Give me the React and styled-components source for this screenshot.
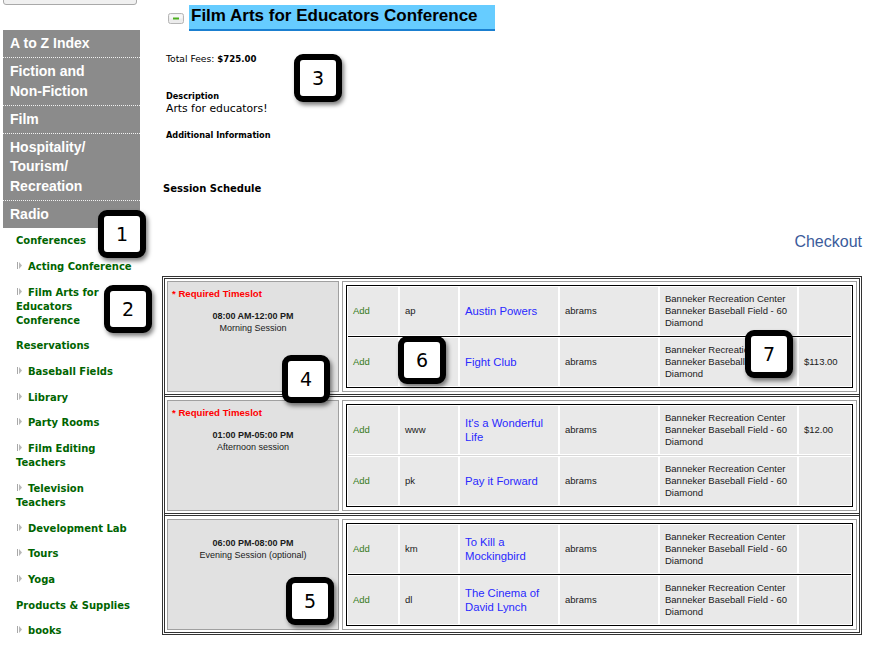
import React from "react";
import styled, { createGlobalStyle } from "styled-components";

const GlobalStyle = createGlobalStyle`
  html, body {
    margin: 0;
    padding: 0;
    background: #ffffff;
  }
  body {
    font-family: "Liberation Sans", Arial, sans-serif;
    color: #000;
  }
`;

const menu = [
  "A to Z Index",
  "Fiction and\nNon-Fiction",
  "Film",
  "Hospitality/\nTourism/\nRecreation",
  "Radio",
];

const subMenu = [
  { label: "Conferences", level: 0 },
  { label: "Acting Conference", level: 1 },
  { label: "Film Arts for\nEducators\nConference", level: 1 },
  { label: "Reservations", level: 0 },
  { label: "Baseball Fields", level: 1 },
  { label: "Library", level: 1 },
  { label: "Party Rooms", level: 1 },
  { label: "Film Editing\nTeachers", level: 1 },
  { label: "Television\nTeachers", level: 1 },
  { label: "Development Lab", level: 1 },
  { label: "Tours", level: 1 },
  { label: "Yoga", level: 1 },
  { label: "Products & Supplies", level: 0 },
  { label: "books", level: 1 },
];

const location = "Banneker Recreation Center\nBanneker Baseball Field - 60\nDiamond";

const sessions = [
  {
    required: true,
    time: "08:00 AM-12:00 PM",
    name: "Morning Session",
    darkLine: true,
    slots: [
      { code: "ap", title: "Austin Powers", price: "" },
      { code: "", title: "Fight Club", price: "$113.00" },
    ],
  },
  {
    required: true,
    time: "01:00 PM-05:00 PM",
    name: "Afternoon session",
    darkLine: false,
    slots: [
      { code: "www", title: "It's a Wonderful\nLife", price: "$12.00" },
      { code: "pk", title: "Pay it Forward", price: "" },
    ],
  },
  {
    required: false,
    time: "06:00 PM-08:00 PM",
    name: "Evening Session (optional)",
    darkLine: true,
    slots: [
      { code: "km", title: "To Kill a\nMockingbird", price: "" },
      { code: "dl", title: "The Cinema of\nDavid Lynch", price: "" },
    ],
  },
];

const callouts = [
  { n: 1, x: 98, y: 210 },
  { n: 2, x: 104, y: 285 },
  { n: 3, x: 294, y: 54 },
  { n: 4, x: 282, y: 355 },
  { n: 5, x: 286, y: 577 },
  { n: 6, x: 398, y: 336 },
  { n: 7, x: 745, y: 330 },
];

const Arrow = () => (
  <ArrowIcon width="5" height="7" viewBox="0 0 5 7">
    <rect x="0" y="0" width="1" height="7" fill="#a8a8a8" />
    <polygon points="2,0 5,3.5 2,7" fill="#b8b8b8" />
  </ArrowIcon>
);

const CollapseIcon = () => (
  <svg width="16" height="11" viewBox="0 0 16 11">
    <rect x="0.5" y="0.5" width="15" height="10" rx="2" fill="#ececec" stroke="#b5b5b5" />
    <rect x="1.5" y="1.5" width="13" height="4" rx="1" fill="#f8f8f8" />
    <rect x="5" y="4.5" width="6" height="2" fill="#4caf1e" />
  </svg>
);

export default function App() {
  return (
    <>
      <GlobalStyle />
      <Page>
        <Sidebar>
          <LocationSelect>All locations</LocationSelect>
          <Menu>
            {menu.map((item) => (
              <MenuItem key={item}>{item}</MenuItem>
            ))}
          </Menu>
          <SubList>
            {subMenu.map((item) => (
              <SubItem key={item.label} $level={item.level}>
                {item.level === 1 && <Arrow />}
                {item.label}
              </SubItem>
            ))}
          </SubList>
        </Sidebar>

        <Main>
          <TitleRow>
            <CollapseIcon />
            <Title>Film Arts for Educators Conference</Title>
          </TitleRow>

          <Fees>
            Total Fees: <b>$725.00</b>
          </Fees>

          <Label>Description</Label>
          <Body>Arts for educators!</Body>
          <Label $gap={13}>Additional Information</Label>

          <ScheduleHeading>Session Schedule</ScheduleHeading>

          <CheckoutRow>
            <Checkout href="#">Checkout</Checkout>
          </CheckoutRow>

          <Schedule>
            {sessions.map((s) => (
              <SessionRow key={s.time}>
                <TimeCell>
                  {s.required && <Required>* Required Timeslot</Required>}
                  <TimeText $spaced={!s.required}>{s.time}</TimeText>
                  <SessionName>{s.name}</SessionName>
                </TimeCell>
                <SlotCell>
                  <SlotTable>
                    {s.slots.map((slot, i) => (
                      <Slot key={slot.title} $first={i === 0} $dark={s.darkLine}>
                        <Cell>
                          <AddLink>Add</AddLink>
                        </Cell>
                        <Cell>{slot.code}</Cell>
                        <Cell>
                          <MovieLink>{slot.title}</MovieLink>
                        </Cell>
                        <Cell>abrams</Cell>
                        <Cell>{location}</Cell>
                        <Cell>{slot.price}</Cell>
                      </Slot>
                    ))}
                  </SlotTable>
                </SlotCell>
              </SessionRow>
            ))}
          </Schedule>
        </Main>

        {callouts.map((c) => (
          <Callout key={c.n} $x={c.x} $y={c.y}>
            {c.n}
          </Callout>
        ))}
      </Page>
    </>
  );
}

const Page = styled.div`
  position: relative;
  display: flex;
  width: 870px;
  height: 645px;
  overflow: hidden;
`;

const Sidebar = styled.div`
  width: 157px;
  padding-left: 3px;
  flex-shrink: 0;
`;

const LocationSelect = styled.div`
  box-sizing: border-box;
  width: 134px;
  height: 20px;
  margin-top: -15px;
  padding: 2px 5px;
  border: 1px solid #a9a9a9;
  border-radius: 3px;
  background: #f0f0f0;
  font-size: 11px;
  line-height: 14px;
  color: #000;
`;

const Menu = styled.div`
  width: 137px;
  margin-top: 25px;
  background: #8b8b8b;
`;

const MenuItem = styled.div`
  padding: 4px 6px 3.5px 7px;
  font-family: "Liberation Sans", Arial, sans-serif;
  font-weight: bold;
  font-size: 14px;
  line-height: 19.5px;
  color: #ffffff;
  white-space: pre-line;
  border-bottom: 1px dotted #f2f2f2;

  &:last-child {
    border-bottom: none;
  }
`;

const SubList = styled.div`
  padding-top: 1px;
`;

const SubItem = styled.div`
  padding: 5.85px 0 5.85px 13px;
  font-family: "DejaVu Sans", Verdana, sans-serif;
  font-weight: bold;
  font-size: 10px;
  line-height: 14px;
  color: #006400;
  white-space: pre-line;
`;

const ArrowIcon = styled.svg`
  display: inline-block;
  margin: 0 6px 0 1px;
  vertical-align: 1px;
`;

const Main = styled.div`
  width: 700px;
  padding-left: 2px;
  display: flex;
  flex-direction: column;
`;

const TitleRow = styled.div`
  display: flex;
  align-items: center;
  gap: 5px;
  margin-top: 5px;
  padding-left: 6px;
`;

const Title = styled.h1`
  width: 304px;
  height: 24px;
  margin: 0;
  padding-left: 2px;
  background: #66ccff;
  border-bottom: 2px solid #1a7fd0;
  font-family: "Liberation Sans", Arial, sans-serif;
  font-weight: bold;
  font-size: 17px;
  line-height: 22px;
  color: #000;
`;

const Fees = styled.div`
  margin-top: 22px;
  padding-left: 4px;
  font-family: "DejaVu Sans", Verdana, sans-serif;
  font-size: 9.2px;
  line-height: 12px;

  b {
    font-size: 8.6px;
  }
`;

const Label = styled.div`
  margin-top: ${(p) => p.$gap || 25}px;
  padding-left: 4px;
  font-family: "DejaVu Sans", Verdana, sans-serif;
  font-weight: bold;
  font-size: 8.2px;
  line-height: 12px;
`;

const Body = styled.div`
  padding-left: 4px;
  font-family: "DejaVu Sans", Verdana, sans-serif;
  font-size: 10.8px;
  line-height: 14px;
`;

const ScheduleHeading = styled.div`
  margin-top: 41px;
  padding-left: 1px;
  font-family: "DejaVu Sans", Verdana, sans-serif;
  font-weight: bold;
  font-size: 10px;
  line-height: 14px;
`;

const CheckoutRow = styled.div`
  display: flex;
  justify-content: flex-end;
  margin-top: 37px;
`;

const Checkout = styled.a`
  font-family: "Liberation Sans", Arial, sans-serif;
  font-size: 16px;
  line-height: 18px;
  color: #3b5b9b;
  text-decoration: none;
`;

const Schedule = styled.div`
  margin-top: 25px;
  width: 700px;
  box-sizing: border-box;
  border: 3px double #333;
`;

const SessionRow = styled.div`
  display: grid;
  grid-template-columns: 172px 1fr;
  gap: 3px;
  padding: 2px;

  & + & {
    border-top: 3px double #333;
    padding-top: 3px;
  }
`;

const TimeCell = styled.div`
  box-sizing: border-box;
  padding: 5px 4px;
  background: #e1e1e1;
  border: 1px solid #a0a0a0;
  text-align: center;
  font-family: "Liberation Sans", Arial, sans-serif;
  font-size: 9px;
  line-height: 12px;
`;

const Required = styled.div`
  text-align: left;
  margin-bottom: 10px;
  font-weight: bold;
  font-size: 9.6px;
  line-height: 13px;
  color: #ff0000;
`;

const TimeText = styled.div`
  margin-top: ${(p) => (p.$spaced ? 12 : 0)}px;
  font-weight: bold;
  color: #1a1a1a;
`;

const SessionName = styled.div`
  color: #1a1a1a;
`;

const SlotCell = styled.div`
  padding: 3px;
  background: #ffffff;
  border: 1px solid #a0a0a0;
`;

const SlotTable = styled.div`
  border: 1px solid #000;
  padding: 1px;
  background: #ffffff;
`;

const Slot = styled.div`
  display: grid;
  grid-template-columns: 50px 58px 98px 98px 137px 1fr;
  gap: 2px;
  background: #ffffff;
  ${(p) =>
    !p.$first &&
    `
    margin-top: 1px;
    padding-top: 1px;
    border-top: 1px solid ${p.$dark ? "#000" : "#d8d8d8"};
  `}
`;

const Cell = styled.div`
  display: flex;
  align-items: center;
  min-height: 48px;
  padding: 0 4px 0 5px;
  background: #e9e9e9;
  font-family: "Liberation Sans", Arial, sans-serif;
  font-size: 9.5px;
  line-height: 12px;
  color: #1a1a1a;
  white-space: pre-line;
`;

const AddLink = styled.span`
  color: #357a1a;
`;

const MovieLink = styled.span`
  font-size: 11.3px;
  line-height: 14px;
  color: #2a2aff;
`;

const Callout = styled.div`
  position: absolute;
  left: ${(p) => p.$x}px;
  top: ${(p) => p.$y}px;
  width: 48px;
  height: 48px;
  box-sizing: border-box;
  display: flex;
  align-items: center;
  justify-content: center;
  border: 6px solid #000;
  border-radius: 9px;
  background: #ffffff;
  box-shadow: 2px 3px 4px rgba(0, 0, 0, 0.5);
  font-family: "DejaVu Sans", sans-serif;
  font-size: 19px;
  color: #000;
`;
